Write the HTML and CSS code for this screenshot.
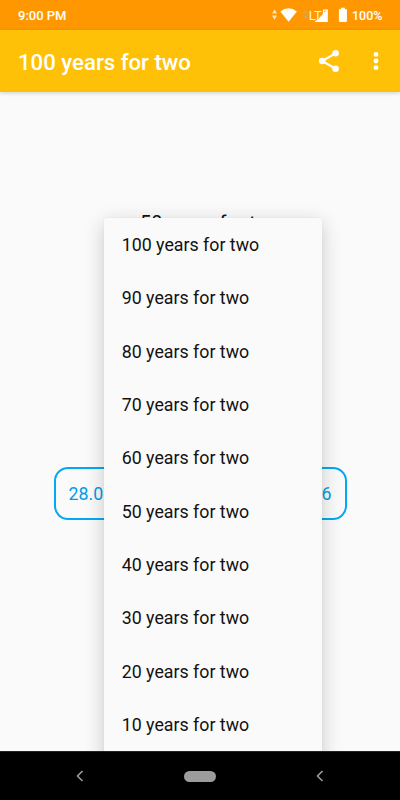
FILE: index.html
```html
<!DOCTYPE html>
<html lang="en">
<head>
<meta charset="utf-8">
<title>100 years for two</title>
<link rel="stylesheet" href="styles.css">
</head>
<body>
<div class="screen">
  <div class="status">
    <span class="clock">9:00 PM</span>
    <svg class="signals" width="84" height="30" viewBox="0 0 84 30">
      <path d="M0 13.500L2.500 9.300 5 13.500zM0 15.500h5L2.500 19.700z" fill="#ffe2b8"/>
      <path d="M8.300 11.500Q16.500 4.800 24.900 11.500L16.600 21.800z" fill="#fff"/>
      <path d="M31 13.500l2.500-4.200 2.500 4.200zM31 15.500h5l-2.500 4.200z" fill="#d7a651"/>
      <path d="M42.500 22L55.800 9V22z" fill="#fff"/>
      <text class="lte" x="36.800" y="19.800">LT</text>
      <path d="M55 10.200h-3.500v4M51.500 15h3" fill="none" stroke="#fff" stroke-width="1.200"/>
      <path d="M46 19L50 14.800" stroke="#ff9800" stroke-width=".6"/>
      <path d="M66.900 9.300h2V7.800h4v1.500h2V21q0 .9-.9.900h-6.200q-.9 0-.9-.9z" fill="#fff"/>
    </svg>
    <span class="battery">100%</span>
  </div>
  <header class="bar">
    <h1>100 years for two</h1>
    <svg class="share" width="22" height="24" viewBox="0 0 22 24">
      <path d="M17.600 4.200L4.200 12l13.400 7.800" fill="none" stroke="#fff" stroke-width="2.200"/>
      <circle cx="17.600" cy="4.200" r="3.300" fill="#fff"/><circle cx="4.200" cy="12" r="3.300" fill="#fff"/><circle cx="17.600" cy="19.800" r="3.300" fill="#fff"/>
    </svg>
    <svg class="more" width="6" height="20" viewBox="0 0 6 20">
      <circle cx="3" cy="3.400" r="2.400" fill="#fff"/><circle cx="3" cy="10" r="2.400" fill="#fff"/><circle cx="3" cy="16.600" r="2.400" fill="#fff"/>
    </svg>
  </header>
  <main class="content">
    <div class="selected">50 years for two</div>
    <div class="dates"><span>28.0</span><span>6</span></div>
    <ul class="menu">
      <li>100 years for two</li>
      <li>90 years for two</li>
      <li>80 years for two</li>
      <li>70 years for two</li>
      <li>60 years for two</li>
      <li>50 years for two</li>
      <li>40 years for two</li>
      <li>30 years for two</li>
      <li>20 years for two</li>
      <li>10 years for two</li>
    </ul>
  </main>
  <nav class="nav">
    <svg width="8" height="12" viewBox="0 0 8 12"><path d="M6.500 1L1.500 6l5 5" fill="none" stroke="#9c9c9c" stroke-width="1.600"/></svg>
    <span class="home"></span>
    <svg width="8" height="12" viewBox="0 0 8 12"><path d="M6.500 1L1.500 6l5 5" fill="none" stroke="#9c9c9c" stroke-width="1.600"/></svg>
  </nav>
</div>
</body>
</html>
```
FILE: styles.css
```css
* { box-sizing: border-box; }
body { margin: 0; font-family: Roboto, "Liberation Sans", sans-serif; }
.screen {
  width: 400px;
  height: 800px;
  display: flex;
  flex-direction: column;
  overflow: hidden;
  background: #fafafa;
}
.status {
  height: 30px;
  flex: none;
  display: flex;
  align-items: center;
  padding: 1px 17px 0 18px;
  background: #ff9800;
  color: #fff;
  font-size: 13px;
  font-weight: 500;
}
.signals { margin: -1px -4px 0 auto; }
.lte { font-size: 13px; font-weight: 400; fill: #fff3df; }
.battery { width: 31px; font-size: 12.5px; white-space: nowrap; }
.bar {
  height: 62px;
  flex: none;
  display: flex;
  align-items: center;
  padding: 0 21px 0 18px;
  background: #ffc107;
  color: #fff;
  box-shadow: 0 1px 4px rgba(0, 0, 0, .18);
  z-index: 1;
}
.bar h1 { margin: 1px 0 0; font-size: 22.2px; font-weight: 500; line-height: 30px; }
.share { margin-left: auto; }
.more { margin-left: 33px; }
.content {
  position: relative;
  height: 659px;
  flex: none;
  overflow: hidden;
  display: flex;
  flex-direction: column;
  align-items: center;
}
.selected {
  margin-top: 120px;
  padding-left: 22px;
  font-size: 19.8px;
  line-height: 24px;
  color: #111;
}
.dates {
  width: 293px;
  height: 53px;
  margin-top: 231px;
  padding: 0 13px;
  display: flex;
  align-items: center;
  justify-content: space-between;
  border: 2px solid #03a9f4;
  border-radius: 14px;
  color: #039be5;
  font-size: 17.8px;
}
.menu {
  position: absolute;
  left: 103.7px;
  top: 126px;
  width: 218px;
  height: 560px;
  margin: 0;
  padding: 0;
  list-style: none;
  border-radius: 2px;
  background: #fafafa;
  box-shadow: 0 5px 20px rgba(0, 0, 0, .2), 0 0 2px rgba(0, 0, 0, .06);
}
.menu li {
  height: 53.35px;
  padding-left: 18px;
  line-height: 53.8px;
  font-size: 17.8px;
  color: #111;
}
.nav {
  height: 49px;
  flex: none;
  display: flex;
  align-items: center;
  justify-content: space-between;
  padding: 0 76px;
  background: #000;
  border-top: 1px solid #222;
}
.home { width: 32px; height: 11px; border-radius: 6px; background: #9c9c9c; }
```
